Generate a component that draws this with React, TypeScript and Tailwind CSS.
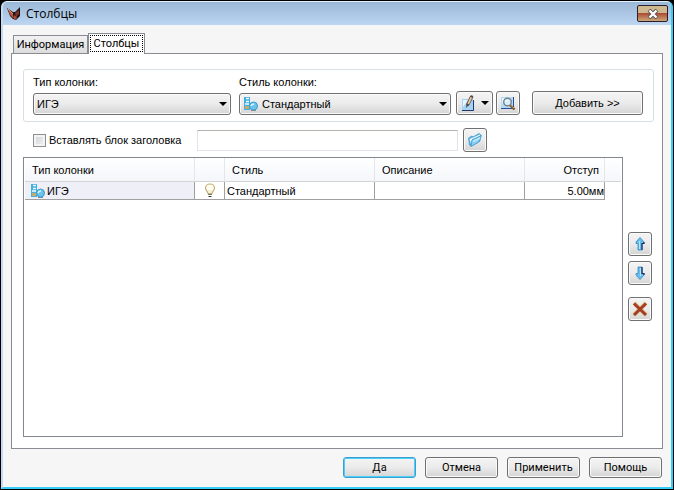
import { useState } from "react"
import type { ReactNode } from "react"
import clsx from "clsx"

const face =
  "rounded-[3px] border border-[#707070] bg-linear-to-b from-[#f4f4f4] from-0% via-[#ebebeb] via-50% to-[#d4d4d4] shadow-[inset_0_0_0_1px_#fafafa]"

function LogoIcon() {
  return (
    <svg width="14" height="16" viewBox="0 0 14 16">
      <path d="M0 2 L6 6 L8 6 L13 1 V10 L9 14 L6 13 L3 10 Z" fill="#1f1214" />
      <path d="M0.5 2.5 L6 7 V12 L3 9 Z" fill="#b9553c" />
      <path d="M1 3 L6 8" stroke="#e59a80" />
      <path d="M12 4 L8 7 L9 11 L12 8 Z" fill="#7e3328" />
      <path d="M7 9 L10 11 L9 14 L6 12 Z" fill="#a84b36" />
    </svg>
  )
}

function ColumnIcon() {
  return (
    <svg width="16" height="16" viewBox="0 0 16 16" className="shrink-0">
      <rect x="1" y="1" width="6" height="13" fill="#45aede" />
      <path d="M3 2.5 H6 M3 5.5 H6" stroke="#e9f9ff" strokeWidth="1.6" />
      <rect x="2" y="7" width="4" height="2" fill="#c8e9f7" />
      <rect x="2" y="10" width="4" height="3" fill="#c8ab6c" />
      <path d="M8 14.5 H13" stroke="#8a8a8a" />
      <circle cx="10.5" cy="10" r="4" fill="#6cc3ec" stroke="#389bd0" />
      <path d="M8 10 A3 3 0 0 1 11 8" fill="none" stroke="#e3f7ff" strokeWidth="1.6" />
    </svg>
  )
}

function EditIcon() {
  return (
    <svg width="16" height="16" viewBox="0 0 16 16" className="shrink-0">
      <path d="M2 4 H13 V15 H2 Z" fill="#a5d2f0" />
      <path d="M3 5 H8 L3 12 Z" fill="#eaf6fd" />
      <path d="M2 15.5 H13.5 V5" fill="none" stroke="#24366e" />
      <path d="M11.5 2 L8 9" stroke="#5c5148" strokeWidth="3.4" strokeLinecap="round" />
      <path d="M11.3 2.4 L8.2 8.8" stroke="#e6c9ac" strokeWidth="1.8" />
      <path d="M6.5 9 L6 13 L9 10 Z" fill="#4a4a55" />
    </svg>
  )
}

function PreviewIcon() {
  return (
    <svg width="16" height="16" viewBox="0 0 16 16">
      <path d="M1 2 H13 V13 H1 Z" fill="#b5daf4" />
      <path d="M2 3 H6 L2 9 Z" fill="#eaf6fd" />
      <path d="M1 13.5 H13.5 V2" fill="none" stroke="#2b4a94" />
      <path d="M10 10 L14.5 14.5" stroke="#7a4a28" strokeWidth="2.4" />
      <path d="M10.4 9.8 L14 13.4" stroke="#e0ac6a" />
      <circle cx="7.5" cy="7" r="3.8" fill="#d6f0fb" stroke="#747f8c" strokeWidth="1.4" />
      <path d="M5.5 7 A2 2 0 0 1 7.5 5" fill="none" stroke="#fff" />
    </svg>
  )
}

function FolderIcon() {
  return (
    <svg width="16" height="16" viewBox="0 0 16 16">
      <path d="M1.5 6 L5 4 L6 5 L12 1.5 L13.5 2.5 L13 9 L4 14 L2.5 13 Z" fill="#5fb3e2" stroke="#3a94cb" strokeWidth="0.7" />
      <path d="M2.5 7 L13 2.5 V4 L5 7.5 L4 12 Z" fill="#e2f5fe" />
      <path d="M5 8 L14.5 3.5 L12 10 L4 14.5 Z" fill="#86cff4" stroke="#3b90c6" strokeWidth="0.7" />
      <path d="M6 9.5 L13 6" stroke="#c3eafb" strokeWidth="1.5" />
    </svg>
  )
}

function BulbIcon() {
  return (
    <svg width="12" height="16" viewBox="0 0 12 16" className="mx-auto block">
      <path d="M4 10.5 C4 8.5 1.5 7.5 1.5 5 A4.5 4 0 0 1 10.5 5 C10.5 7.5 8 8.5 8 10.5 Z" fill="#fffdf0" stroke="#c5ae73" strokeWidth="1.2" />
      <path d="M4 11.5 H8" stroke="#777" />
      <path d="M4.5 13.5 H7.5" stroke="#333" />
      <path d="M5 9.5 L5 7 M7 9.5 L7 7" stroke="#e4d7a8" strokeWidth="0.7" />
    </svg>
  )
}

function ArrowIcon({ down = false }: { down?: boolean }) {
  return (
    <svg width="10" height="14" viewBox="0 0 10 14" className={clsx(down && "rotate-180")}>
      <path d="M5 0.5 L9 5 V6.5 H7 V13 H3 V6.5 H1 V5 Z" fill="#69bdea" stroke="#3388bf" strokeWidth="0.8" />
      <path d={down ? "M3 13 V6.5 H1 V5" : "M7 13 V6.5 H9 V5"} fill="none" stroke="#1d2c66" strokeWidth="1.2" />
      <path d="M4.5 4 V12" stroke="#b4e6fb" />
    </svg>
  )
}

function DeleteIcon() {
  return (
    <svg width="16" height="16" viewBox="0 0 16 16">
      <path d="M2 2 L14 14 M14 2 L2 14" stroke="#d2ba78" strokeWidth="4" />
      <path d="M2 2.5 L14 14 M14 2.5 L2 14" stroke="#a83a26" strokeWidth="2.8" />
    </svg>
  )
}

function Caret() {
  return (
    <svg width="8" height="4" viewBox="0 0 8 4" className="shrink-0">
      <path d="M0 0 H8 L4 4 Z" fill="#000" />
    </svg>
  )
}

function SelectBox({ id, value, icon }: { id: string; value: string; icon?: ReactNode }) {
  return (
    <div className="relative">
      {icon && <span className="pointer-events-none absolute top-[3px] left-1">{icon}</span>}
      <select id={id} className={clsx(face, "block h-[22px] w-full appearance-none", icon ? "pl-[22px]" : "pl-[3px]")}>
        <option>{value}</option>
      </select>
      <span className="pointer-events-none absolute top-[9px] right-1">
        <Caret />
      </span>
    </div>
  )
}

function IconButton({ label, children }: { label: string; children: ReactNode }) {
  return (
    <button aria-label={label} className={clsx(face, "flex size-6 shrink-0 items-center justify-center")}>
      {children}
    </button>
  )
}

const rows = [{ type: "ИГЭ", style: "Стандартный", description: "", offset: "5.00мм" }]
const actions = ["Да", "Отмена", "Применить", "Помощь"]

export default function App() {
  const [withHeader, setWithHeader] = useState(false)

  return (
    <div className="flex min-h-screen flex-col bg-black p-px font-['Liberation_Sans',sans-serif] text-[11px] leading-4 text-black">
      <div className="flex flex-1 flex-col overflow-hidden rounded-t-md border-2 border-t border-[#c3dbf5] border-t-[#e4f0fb] border-r-[#35cdf5] border-b-[#35cdf5] bg-[#f6f6f6]">
        <header className="flex h-[23px] items-center bg-linear-to-b from-[#9bb8d6] to-[#bcd6f2] pr-[3px] pl-1 font-['Open_Sans',sans-serif] text-[12px]">
          <LogoIcon />
          <h1 className="ml-[5px] flex-1">Столбцы</h1>
          <button
            aria-label="Закрыть"
            className="flex h-[17px] w-[31px] items-center justify-center rounded-[2px] border border-[#2c1c2c] bg-linear-to-b from-[#cdb890] from-45% via-[#ad4b34] via-50% to-[#c9a878]"
          >
            <svg width="12" height="10" viewBox="0 0 12 10">
              <path d="M2 1 L10 9 M10 1 L2 9" stroke="#555" strokeWidth="4" />
              <path d="M2.5 1.5 L9.5 8.5 M9.5 1.5 L2.5 8.5" stroke="#fff" strokeWidth="2.4" />
            </svg>
          </button>
        </header>

        <main className="flex flex-1 flex-col px-2 pt-2">
          <div role="tablist" className="flex items-end pl-0.5 font-['Roboto',sans-serif]">
            <button
              role="tab"
              aria-selected={false}
              className="h-[18px] w-[75px] border border-b-0 border-[#898c95] bg-linear-to-b from-[#f2f2f2] to-[#dcdcdc]"
            >
              Информация
            </button>
            <button
              role="tab"
              aria-selected
              className="z-10 -mb-px h-[21px] w-[57px] border border-b-0 border-[#898c95] bg-white px-px pt-px pb-0.5"
            >
              <span className="block h-full border border-dotted border-black leading-[15px]">Столбцы</span>
            </button>
          </div>

          <div className="flex flex-1 flex-col border border-[#898c95] bg-white px-[11px] pt-[15px] pb-[11px]">
            <div className="mr-[-3px] flex items-end rounded-[3px] border border-[#d5dfe5] pt-1 pr-[10px] pb-[6px] pl-[9px]">
              <div className="w-[198px]">
                <label htmlFor="type" className="block pb-[3px]">Тип колонки:</label>
                <SelectBox id="type" value="ИГЭ" />
              </div>
              <div className="ml-2 flex-1">
                <label htmlFor="style" className="block pb-[3px]">Стиль колонки:</label>
                <SelectBox id="style" value="Стандартный" icon={<ColumnIcon />} />
              </div>
              <button aria-label="Изменить" className={clsx(face, "ml-[5px] flex h-6 w-[37px] items-center justify-between px-[3px]")}>
                <EditIcon />
                <Caret />
              </button>
              <div className="ml-[3px]">
                <IconButton label="Просмотр">
                  <PreviewIcon />
                </IconButton>
              </div>
              <button className={clsx(face, "ml-3 h-6 w-[111px]")}>Добавить &gt;&gt;</button>
            </div>

            <div className="flex items-center pt-[6px] pb-[5px] pl-[10px]">
              <input
                id="header-block"
                type="checkbox"
                checked={withHeader}
                onChange={(e) => setWithHeader(e.target.checked)}
                className="size-[13px] appearance-none border border-[#8e8f8f] bg-linear-to-br from-[#cfd2d6] to-[#f3f3f3] shadow-[inset_0_0_0_2px_#f4f4f4] checked:bg-[#4a6d9c]"
              />
              <label htmlFor="header-block" className="ml-[3px] w-[148px]">Вставлять блок заголовка</label>
              <input
                aria-label="Блок заголовка"
                disabled={!withHeader}
                className="mr-[5px] h-[21px] max-w-[261px] flex-1 border border-[#e2e3ea] border-t-[#b5b2ae] bg-white px-1"
              />
              <IconButton label="Открыть">
                <FolderIcon />
              </IconButton>
            </div>

            <div className="flex flex-1 gap-[5px]">
              <div className="flex-1 border border-[#828790] px-px">
                <table className="w-full table-fixed border-separate border-spacing-0">
                  <colgroup>
                    <col className="w-[170px]" />
                    <col className="w-[30px]" />
                    <col className="w-[150px]" />
                    <col />
                    <col className="w-[80px]" />
                    <col className="w-4" />
                  </colgroup>
                  <thead>
                    <tr className="h-6 bg-linear-to-b from-white to-[#f4f6fa] *:border-b *:border-[#d5d5d5] *:border-r-[#e6e6ea] *:p-0 *:font-normal">
                      <th className="border-r pl-[7px]! text-left">Тип колонки</th>
                      <th className="border-r" />
                      <th className="border-r pl-[7px]! text-left">Стиль</th>
                      <th className="border-r pl-[7px]! text-left">Описание</th>
                      <th className="border-r pr-[5px]! text-right">Отступ</th>
                      <th />
                    </tr>
                  </thead>
                  <tbody>
                    {rows.map((row) => (
                      <tr key={row.type} className="h-[18px]">
                        <td className="border-r border-b border-[#a0a0a0] bg-[#efeff8] p-0">
                          <div className="flex h-[17px] items-center gap-px pl-[5px]">
                            <ColumnIcon />
                            {row.type}
                          </div>
                        </td>
                        <td className="border-r border-b border-[#a0a0a0] p-0">
                          <BulbIcon />
                        </td>
                        <td className="border-r border-b border-[#a0a0a0] p-0 pl-0.5">{row.style}</td>
                        <td className="border-r border-b border-[#a0a0a0] p-0 pl-0.5">{row.description}</td>
                        <td className="border-r border-b border-[#a0a0a0] p-0 text-right">{row.offset}</td>
                        <td className="p-0" />
                      </tr>
                    ))}
                  </tbody>
                </table>
              </div>
              <div className="-mr-px flex flex-col pt-[75px]">
                <IconButton label="Вверх">
                  <ArrowIcon />
                </IconButton>
                <div className="pt-[5px] pb-3">
                  <IconButton label="Вниз">
                    <ArrowIcon down />
                  </IconButton>
                </div>
                <IconButton label="Удалить">
                  <DeleteIcon />
                </IconButton>
              </div>
            </div>
          </div>
        </main>

        <footer className="flex justify-end gap-[9px] pt-2 pr-[9px] pb-[9px] font-['Roboto',sans-serif]">
          {actions.map((action, i) => (
            <button key={action} className={clsx(face, "h-[21px] w-[73px]", i === 0 && "border-[#3c9fd0]! shadow-[inset_0_0_0_1px_#48d0fa]!")}>
              {action}
            </button>
          ))}
        </footer>
      </div>
    </div>
  )
}
